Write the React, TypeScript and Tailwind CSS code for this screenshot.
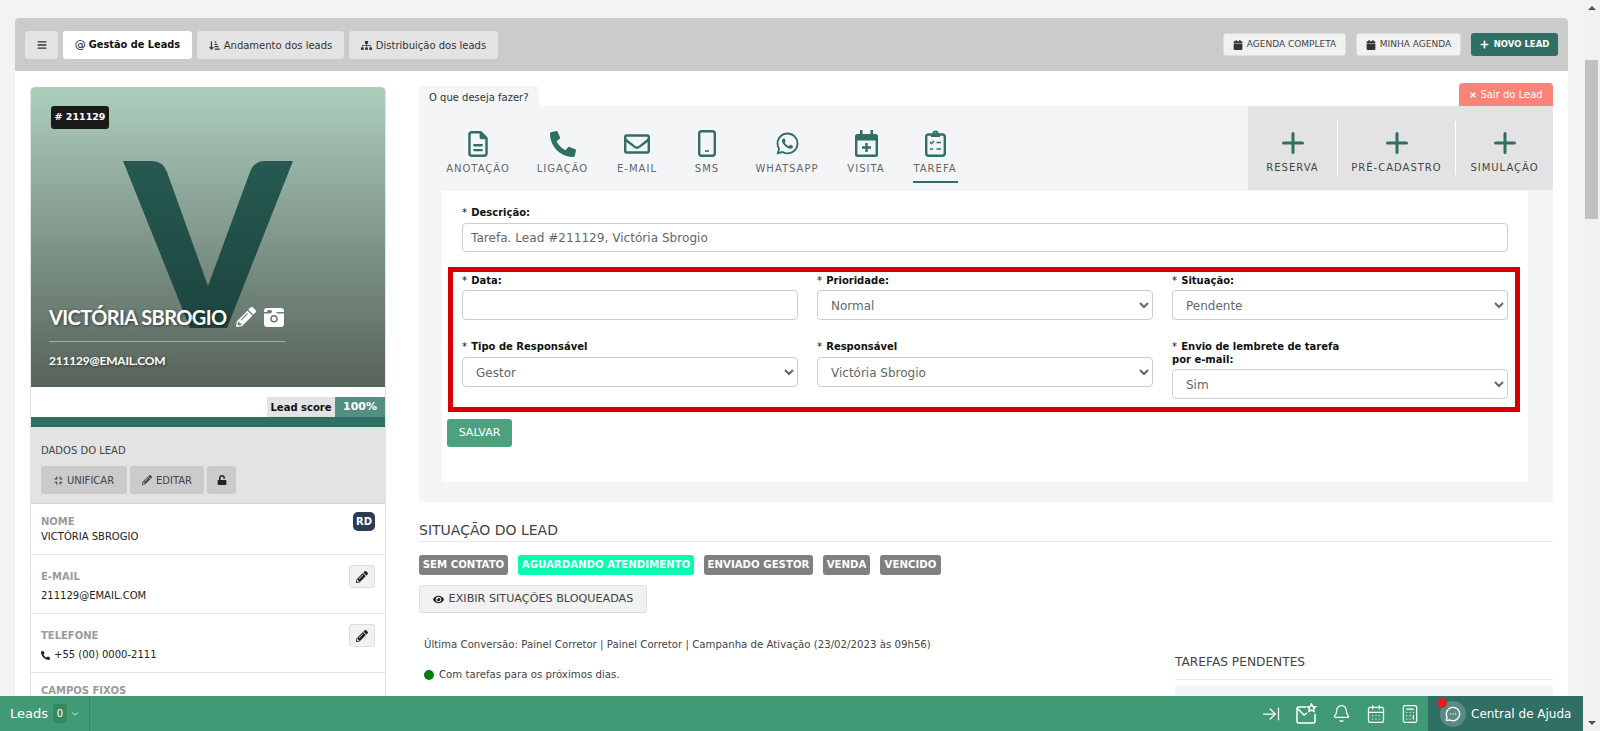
import React from "react";
import { FaBars, FaTimes, FaPencilAlt, FaCalendar, FaSitemap, FaPhoneAlt, FaRegEnvelope, FaWhatsapp, FaEye, FaUnlock, FaCompress, FaPlus } from "react-icons/fa";
import { FaRegFileLines, FaArrowDownShortWide } from "react-icons/fa6";
import { ArrowRightToLine, Bell, CalendarDays, Calculator, MessageCircleMore, ChevronDown } from "lucide-react";

const green = "text-[#2f6f64]";

function Anota() {
  return <FaRegFileLines className="w-[20px] h-[26px]" />;
}
function Mobile() {
  return (
    <svg width="18" height="27" viewBox="0 0 18 27" fill="none" stroke="currentColor" strokeWidth="2.4">
      <rect x="1.2" y="1.2" width="15.6" height="24.6" rx="2.5" />
      <path d="M7 21h4" strokeWidth="1.6" />
    </svg>
  );
}
function CalPlus() {
  return (
    <svg width="23" height="27" viewBox="0 0 23 27" fill="currentColor">
      <path d="M5 0h2.5v4H15.500V0H18v4h2.500A2.500 2.500 0 0 1 23 6.500v18a2.500 2.500 0 0 1-2.500 2.500h-18A2.500 2.500 0 0 1 0 24.500v-18A2.500 2.500 0 0 1 2.500 4H5zM2.400 10.500v14h18.200v-14z" fillRule="evenodd" />
      <path d="M10.300 13h2.400v3.300H16v2.400h-3.300V22h-2.400v-3.300H7v-2.400h3.300z" />
    </svg>
  );
}
function Clip() {
  return (
    <svg width="21" height="27" viewBox="0 0 21 27" fill="none" stroke="currentColor">
      <rect x="1.200" y="4.500" width="18.600" height="21.300" rx="2.500" strokeWidth="2.400" />
      <circle cx="10.500" cy="3.500" r="2" strokeWidth="2" />
      <path d="M6 5.500h9" strokeWidth="3" />
      <path d="M5 12l1.500 1.500L9 11M11.500 12.500H16M5 19h3M11.500 19H16" strokeWidth="1.500" />
    </svg>
  );
}
function CameraIcon() {
  return (
    <svg width="20" height="19" viewBox="0 0 20 19" fill="#fff">
      <path d="M3 0h14a3 3 0 0 1 3 3v1H8.500L7 2H4L3 4H0V3a3 3 0 0 1 3-3z" />
      <path fillRule="evenodd" d="M0 5.500h6.200a5 5 0 0 1 7.600 0H20V16a3 3 0 0 1-3 3H3a3 3 0 0 1-3-3zM10 7a3.800 3.800 0 1 0 0 7.600A3.800 3.800 0 0 0 10 7z" />
      <circle cx="10" cy="10.800" r="2.300" />
    </svg>
  );
}
function MailStar() {
  return (
    <svg width="21" height="21" viewBox="0 0 21 21" fill="none" stroke="currentColor" strokeWidth="1.500">
      <path d="M10 4H2.500A1.500 1.500 0 0 0 1 5.500v13A1.500 1.500 0 0 0 2.500 20h15a1.500 1.500 0 0 0 1.500-1.500V11" />
      <path d="M1.500 5.500L8 12l3-2" />
      <path d="M15.500 1l1.200 2.500 2.800.4-2 1.900.5 2.700-2.500-1.300-2.500 1.300.5-2.700-2-1.900 2.800-.4z" />
    </svg>
  );
}
function ThinPlus() {
  return (
    <svg width="22" height="22" viewBox="0 0 22 22" stroke="currentColor" strokeWidth="3" strokeLinecap="round" className={`mt-[11px] ${green}`}>
      <path d="M11 1.500v19M1.500 11h19" />
    </svg>
  );
}

function Action({ icon, label, w, active }: { icon: React.ReactNode; label: string; w: string; active?: boolean }) {
  return (
    <div className={`flex flex-col items-center ${w}`}>
      <div className={`h-[27px] mt-[24px] flex items-center justify-center ${green}`}>{icon}</div>
      <div className="mt-[6px] text-[10px] leading-[12px] tracking-[1px] text-[#666]">{label}</div>
      {active && <div className="mt-[6px] w-[45px] h-[2px] bg-[#2f6f64]" />}
    </div>
  );
}

function Plus({ label, w, sep }: { label: string; w: string; sep?: boolean }) {
  return (
    <div className={`${w} h-[54px] my-[15px] flex flex-col items-center ${sep ? "border-r border-white" : ""}`}>
      <ThinPlus />
      <div className="mt-[8px] text-[10px] leading-[12px] tracking-[1px] text-[#444]">{label}</div>
    </div>
  );
}

function Label({ children, mb = "mb-[3px]" }: { children: React.ReactNode; mb?: string }) {
  return (
    <div className={`text-[10px] leading-[13px] text-[#111] ${mb}`}>
      <span className="font-normal mr-[1px]">* </span>
      <span className="font-bold">{children}</span>
    </div>
  );
}

function Sel({ value }: { value: string }) {
  return (
    <select
      defaultValue={value}
      className="w-full h-[30px] pl-[9px] pr-[2px] pt-[2px] text-[12px] text-[#666] bg-white border border-[#ccc] rounded-[4px]"
    >
      <option>{value}</option>
    </select>
  );
}

function Row({ label, h, children, right, gap }: { label: string; h: string; children: React.ReactNode; right?: React.ReactNode; gap: string }) {
  return (
    <div className={`${h} border-b border-[#e3e3e3] pl-[10px] pr-[10px] flex justify-between`}>
      <div>
        <div className={`text-[10px] leading-[12px] font-bold text-[#9a9a9a] ${gap}`}>{label}</div>
        <div className="text-[10px] leading-[12px] text-[#222]">{children}</div>
      </div>
      {right}
    </div>
  );
}

function EditBtn() {
  return (
    <div className="mt-[10px] w-[26px] h-[23px] flex items-center justify-center bg-[#f1f1f1] border border-[#ddd] rounded-[3px] text-[#222]">
      <FaPencilAlt className="w-[12px] h-[12px]" />
    </div>
  );
}

function Badge({ children, w, cls = "bg-[#808080]" }: { children: React.ReactNode; w: string; cls?: string }) {
  return <div className={`${w} h-[20px] flex items-center justify-center whitespace-nowrap rounded-[3px] text-[10.200px] font-bold text-white ${cls}`}>{children}</div>;
}

export default function App() {
  return (
    <div className="relative w-[1600px] h-[731px] overflow-hidden flex bg-[#f3f3f3] font-['DejaVu_Sans',sans-serif]">
      <div className="w-[1583px] h-full px-[15px] pt-[18px] flex flex-col">
        {/* header */}
        <div className="h-[53px] shrink-0 bg-[#cbcbcb] rounded-t-[4px] pl-[10px] pr-[10px] flex items-start justify-between">
          <div className="flex gap-[5px] mt-[13px] text-[10px] text-[#333]">
            <div className="w-[33px] h-[28px] rounded-[3px] bg-[#e3e3e3] flex items-center justify-center"><FaBars className="w-[10px] h-[10px]" /></div>
            <div className="w-[129px] h-[28px] rounded-[3px] bg-white flex items-center justify-center gap-[3px] font-bold text-[9.800px] text-[#111]"><span className="font-normal text-[11px]">@</span>Gestão de Leads</div>
            <div className="w-[147px] h-[28px] rounded-[3px] bg-[#e3e3e3] flex items-center justify-center gap-[4px]"><FaArrowDownShortWide className="w-[11px] h-[11px]" />Andamento dos leads</div>
            <div className="w-[149px] h-[28px] rounded-[3px] bg-[#e3e3e3] flex items-center justify-center gap-[4px]"><FaSitemap className="w-[11px] h-[11px]" />Distribuição dos leads</div>
          </div>
          <div className="flex gap-[10px] mt-[15px] text-[9px]">
            <div className="w-[123px] h-[23px] rounded-[3px] bg-[#f1f1f1] border border-[#ddd] flex items-center justify-center gap-[4px] text-[#444]"><FaCalendar className="w-[10px] h-[10px] text-[#333]" />AGENDA COMPLETA</div>
            <div className="w-[105px] h-[23px] rounded-[3px] bg-[#f1f1f1] border border-[#ddd] flex items-center justify-center gap-[4px] text-[#444]"><FaCalendar className="w-[10px] h-[10px] text-[#333]" />MINHA AGENDA</div>
            <div className="w-[87px] h-[23px] rounded-[3px] bg-[#2f6f64] flex items-center justify-center gap-[5px] text-white text-[8.500px] font-bold"><FaPlus className="w-[9px] h-[9px]" />NOVO LEAD</div>
          </div>
        </div>

        {/* white */}
        <div className="flex-1 bg-white pl-[15px] pr-[15px] pt-[12px] flex overflow-hidden">
          {/* left */}
          <div className="w-[356px] shrink-0 mt-[4px] border-x border-[#e3e3e3] self-start">
            <div className="relative h-[300px] rounded-t-[4px] overflow-hidden bg-gradient-to-b from-[#adcfbe] to-[#57635b] flex flex-col">
              <svg className="absolute left-0 top-0" width="354" height="300" viewBox="0 0 354 300">
                <defs>
                  <linearGradient id="v" x1="0" y1="0" x2="0" y2="1">
                    <stop offset="0" stopColor="#265a51" />
                    <stop offset="1" stopColor="#1c443e" />
                  </linearGradient>
                </defs>
                <path d="M92 74H121Q132 74 136 85L177 199L219 85Q223 74 234 74H262L196 241H159Z" fill="url(#v)" />
              </svg>
              <div className="relative ml-[20px] mt-[19px] w-[58px] h-[23px] rounded-[3px] bg-[#1a1a1a] text-white text-[9.500px] font-bold flex items-center justify-center"># 211129</div>
              <div className="relative mt-[auto] ml-[18px] mb-[19px] w-[236px] text-white font-['Lato',sans-serif] [text-shadow:1px_1px_3px_rgba(0,0,0,0.5)]">
                <div className="flex items-center h-[26px]">
                  <span className="text-[20px] font-bold tracking-[-0.6px] leading-[26px]">VICTÓRIA SBROGIO</span>
                  <FaPencilAlt className="w-[20px] h-[20px] ml-[9px]" />
                  <span className="ml-[8px]"><CameraIcon /></span>
                </div>
                <div className="mt-[11px] h-px bg-white/40" />
                <div className="mt-[12px] text-[12px] font-bold leading-[14px] tracking-[-0.2px]">211129@EMAIL.COM</div>
              </div>
            </div>
            <div className="h-[30px] bg-white flex justify-end items-end">
              <div className="h-[20px] w-[68px] bg-[#e3e3e3] text-[10px] font-bold text-[#111] flex items-center justify-center">Lead score</div>
              <div className="h-[20px] w-[50px] bg-[#548f83] text-[11px] font-bold text-white flex items-center justify-center">100%</div>
            </div>
            <div className="h-[10px] bg-[#2f6f64]" />
            <div className="h-[77px] bg-[#e3e3e3] border-b border-[#d3d3d3] pl-[10px] pt-[18px]">
              <div className="text-[10px] leading-[12px] text-[#444]">DADOS DO LEAD</div>
              <div className="flex gap-[3px] mt-[9px] text-[10px] text-[#444]">
                <div className="w-[86px] h-[28px] rounded-[3px] bg-[#cbcbcb] flex items-center justify-center gap-[4px]"><FaCompress className="w-[9px] h-[9px]" />UNIFICAR</div>
                <div className="w-[74px] h-[28px] rounded-[3px] bg-[#cbcbcb] flex items-center justify-center gap-[4px]"><FaPencilAlt className="w-[10px] h-[10px]" />EDITAR</div>
                <div className="w-[29px] h-[28px] rounded-[3px] bg-[#cbcbcb] flex items-center justify-center text-[#222]"><FaUnlock className="w-[10px] h-[10px]" /></div>
              </div>
            </div>
            <div className="pt-[12px] h-[51px] border-b border-[#e3e3e3] pl-[10px] pr-[10px] flex justify-between relative">
              <div>
                <div className="text-[10px] leading-[12px] font-bold text-[#9a9a9a] mb-[3px]">NOME</div>
                <div className="text-[10px] leading-[12px] text-[#222]">VICTÓRIA SBROGIO</div>
              </div>
              <div className="-mt-[4px] w-[22px] h-[19px] rounded-[5px] bg-[#2b3c55] text-white text-[10px] font-bold flex items-center justify-center">RD</div>
            </div>
            <Row label="E-MAIL" h="h-[59px] pt-0" gap="mt-[16px] mb-[7px]" right={<EditBtn />}>211129@EMAIL.COM</Row>
            <Row label="TELEFONE" h="h-[59px]" gap="mt-[16px] mb-[7px]" right={<EditBtn />}>
              <span className="inline-flex items-center gap-[4px]"><FaPhoneAlt className="w-[9px] h-[9px]" />+55 (00) 0000-2111</span>
            </Row>
            <div className="pl-[10px] pt-[12px] text-[10px] leading-[12px] font-bold text-[#9a9a9a]">CAMPOS FIXOS</div>
          </div>

          {/* right */}
          <div className="flex-1 ml-[33px]">
            <div className="flex justify-between items-end h-[23px]">
              <div className="w-[120px] h-[20px] rounded-t-[4px] bg-[#f4f5f7] pl-[10px] text-[10px] leading-[24px] text-[#333]">O que deseja fazer?</div>
              <div className="w-[94px] h-[23px] rounded-t-[4px] bg-[#f88379] text-white text-[10px] flex items-center justify-center gap-[3px]"><FaTimes className="w-[8px] h-[8px]" />Sair do Lead</div>
            </div>
            <div className="bg-[#f4f5f7] pb-[20px]">
              <div className="flex h-[84px] justify-between">
                <div className="flex pl-[17px]">
                  <Action w="w-[84px]" label="ANOTAÇÃO" icon={<Anota />} />
                  <Action w="w-[85px]" label="LIGAÇÃO" icon={<FaPhoneAlt className="w-[26px] h-[26px]" />} />
                  <Action w="w-[64px]" label="E-MAIL" icon={<FaRegEnvelope className="w-[26px] h-[26px]" />} />
                  <Action w="w-[76px]" label="SMS" icon={<Mobile />} />
                  <Action w="w-[84px]" label="WHATSAPP" icon={<FaWhatsapp className="w-[25px] h-[25px]" />} />
                  <Action w="w-[74px]" label="VISITA" icon={<CalPlus />} />
                  <Action w="w-[64px]" label="TAREFA" icon={<Clip />} active />
                </div>
                <div className="w-[305px] bg-[#e3e3e3] flex">
                  <Plus w="w-[90px]" label="RESERVA" sep />
                  <Plus w="w-[118px]" label="PRÉ-CADASTRO" sep />
                  <Plus w="w-[97px]" label="SIMULAÇÃO" />
                </div>
              </div>
              <div className="ml-[23px] mr-[25px] mt-px bg-white h-[291px] pl-[5px] pr-[5px] pt-[15px]">
                <div className="mx-[15px]">
                  <Label mb="mb-[4px]">Descrição:</Label>
                  <input readOnly value="Tarefa. Lead #211129, Victória Sbrogio" className="w-full h-[29px] px-[8px] text-[12.100px] text-[#666] border border-[#ccc] rounded-[4px]" />
                </div>
                <div className="ml-px mr-[3px] mt-[15px] h-[145px] border-[5px] border-[#d90000] pl-[9px] pr-[7px] pt-[2px]">
                  <div className="grid grid-cols-3 gap-x-[19px] gap-y-[20px] items-start">
                    <div>
                      <Label>Data:</Label>
                      <input readOnly className="w-full h-[30px] border border-[#ccc] rounded-[4px]" />
                    </div>
                    <div>
                      <Label>Prioridade:</Label>
                      <Sel value="Normal" />
                    </div>
                    <div>
                      <Label>Situação:</Label>
                      <Sel value="Pendente" />
                    </div>
                    <div>
                      <Label mb="mb-[4px]">Tipo de Responsável</Label>
                      <Sel value="Gestor" />
                    </div>
                    <div>
                      <Label mb="mb-[4px]">Responsável</Label>
                      <Sel value="Victória Sbrogio" />
                    </div>
                    <div>
                      <Label>Envio de lembrete de tarefa<br />por e-mail:</Label>
                      <Sel value="Sim" />
                    </div>
                  </div>
                </div>
                <div className="mt-[7px] w-[65px] h-[28px] rounded-[3px] bg-[#4ea17f] text-white text-[11px] flex items-center justify-center">SALVAR</div>
              </div>
            </div>
            <div className="mt-[18px] h-[22px] border-b border-[#e8e8e8] text-[14px] leading-[20px] text-[#444]">SITUAÇÃO DO LEAD</div>
            <div className="flex gap-[10px] mt-[13px]">
              <Badge w="w-[89px]">SEM CONTATO</Badge>
              <Badge w="w-[176px]" cls="bg-[#05fcb0]">AGUARDANDO ATENDIMENTO</Badge>
              <Badge w="w-[109px]">ENVIADO GESTOR</Badge>
              <Badge w="w-[47px]">VENDA</Badge>
              <Badge w="w-[61px]">VENCIDO</Badge>
            </div>
            <div className="mt-[10px] w-[228px] h-[28px] rounded-[3px] bg-[#f1f1f1] border border-[#ddd] flex items-center justify-center gap-[5px] text-[11.200px] text-[#444]"><FaEye className="w-[11px] h-[11px] text-[#222]" />EXIBIR SITUAÇÕES BLOQUEADAS</div>
            <div className="flex">
              <div className="w-[756px] shrink-0 pl-[5px]">
                <div className="mt-[26px] text-[10.200px] leading-[12px] text-[#444]">Última Conversão: Painel Corretor | Painel Corretor | Campanha de Ativação (23/02/2023 às 09h56)</div>
                <div className="mt-[18px] flex items-center gap-[5px] text-[10.200px] leading-[12px] text-[#444]"><span className="w-[10px] h-[10px] rounded-full bg-[#008000]" />Com tarefas para os próximos dias.</div>
              </div>
              <div className="flex-1 mt-[40px]">
                <div className="h-[27px] border-b border-[#e8e8e8] text-[12.200px] leading-[18px] text-[#444]">TAREFAS PENDENTES</div>
                <div className="mt-[5px] h-[40px] rounded-[4px] bg-[#f4f5f7]" />
              </div>
            </div>
          </div>
        </div>
      </div>

      {/* scrollbar */}
      <div className="w-[17px] h-full bg-[#f1f1f1] flex flex-col items-center relative">
        <div className="mt-[6px] w-0 h-0 border-x-[4px] border-x-transparent border-b-[4px] border-b-[#505050]" />
        <div className="mt-[50px] w-[13px] h-[159px] bg-[#c1c1c1]" />
        <div className="mt-auto mb-[6px] w-0 h-0 border-x-[4px] border-x-transparent border-t-[4px] border-t-[#505050]" />
      </div>

      {/* bottom bar */}
      <div className="absolute left-0 bottom-0 w-[1583px] h-[35px] bg-[#3f9a75] flex items-center text-white">
        <div className="w-[90px] h-full border-r border-[#37885f] flex items-center pl-[10px]">
          <span className="text-[13px]">Leads</span>
          <span className="ml-[5px] w-[14px] h-[19px] rounded-[3px] bg-[#36885f] text-[10px] flex items-center justify-center">0</span>
          <ChevronDown className="ml-[3px] w-[10px] h-[10px]" />
        </div>
        <div className="ml-auto flex items-center h-full">
          <ArrowRightToLine className="w-[20px] h-[20px]" strokeWidth={1.500} />
          <span className="ml-[15px]"><MailStar /></span>
          <Bell className="ml-[15px] w-[19px] h-[19px]" strokeWidth={1.500} />
          <CalendarDays className="ml-[15px] w-[20px] h-[20px]" strokeWidth={1.500} />
          <Calculator className="ml-[14px] w-[20px] h-[20px]" strokeWidth={1.500} />
          <div className="relative ml-[8px] w-[155px] h-full bg-[#2f6f64] flex items-center pl-[12px]">
            <span className="w-[26px] h-[26px] rounded-full bg-white/20 flex items-center justify-center"><MessageCircleMore className="w-[16px] h-[16px]" strokeWidth={2} /></span>
            <span className="ml-[5px] text-[12px] whitespace-nowrap">Central de Ajuda</span>
            <span className="absolute left-[9px] top-[2px] w-[10px] h-[10px] rounded-full bg-[#e02020]" />
          </div>
        </div>
      </div>
    </div>
  );
}
